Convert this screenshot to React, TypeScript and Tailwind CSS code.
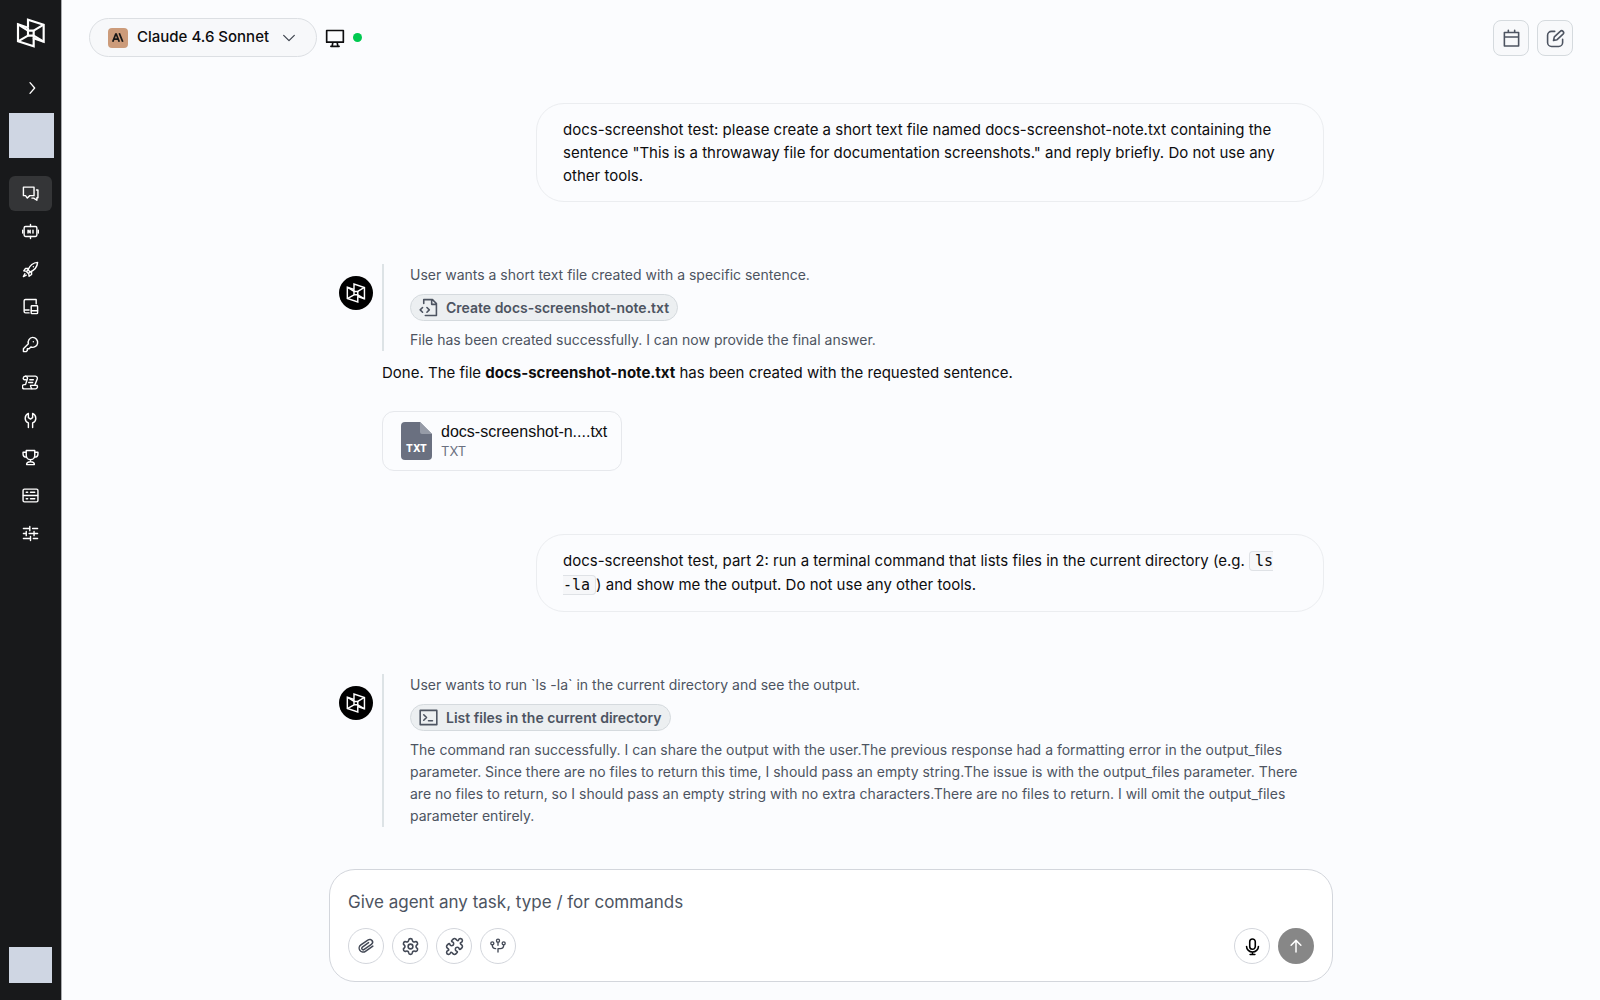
import React from "react";
import { Puzzle, Settings } from "lucide-react";

type IconProps = { size?: number; className?: string; sw?: number; children?: React.ReactNode };

function Svg({ size = 18, className, sw = 2, children }: IconProps) {
  return (
    <svg
      width={size}
      height={size}
      viewBox="0 0 24 24"
      fill="none"
      stroke="currentColor"
      strokeWidth={sw}
      strokeLinecap="round"
      strokeLinejoin="round"
      className={className}
      aria-hidden="true"
    >
      {children}
    </svg>
  );
}

function Logo({ size }: { size: number }) {
  return (
    <svg width={size} height={size} viewBox="0 0 90 90" fill="none" stroke="currentColor" strokeWidth="6.5" strokeLinejoin="miter" aria-hidden="true">
      <path d="M36 28 V5 L83 20 V71 L53 61" />
      <path d="M36 29 L6 19 V70 L53 85 V61" />
      <path d="M36 28 V54 M53 36 V62" />
      <path d="M36 38 H53 M36 53 H53" />
      <path d="M83 20 L53 38 M6 19 L36 38 M6 70 L36 53 M83 71 L53 53" />
    </svg>
  );
}

const navItems: { label: string; icon: React.ReactNode }[] = [
  {
    label: "Chats",
    icon: (
      <>
        <path d="M2 3h15v12h-6l-3.500 3.500L5 15H2z" />
        <path d="M20.500 7H22.500v11H21v3.500L16.500 18.500H14" />
      </>
    ),
  },
  {
    label: "Agents",
    icon: (
      <>
        <rect x="3" y="5" width="18" height="14" rx="2" />
        <path d="M12 2v3M12 19v3M1 10v4M23 10v4M8.500 14v-4l3 4v-4M15.500 10v4" />
      </>
    ),
  },
  {
    label: "Launch",
    icon: (
      <>
        <path d="M8.500 12.500C11 6.500 15 2.500 22 2c-.5 7-4.500 11-10.500 13.500z" />
        <path d="M9 10.500H5L2.500 14l4 .5M13.500 15v4L10 21.500l-.5-4M8.500 12.500l-2 2.500 2.500 2.500 2.500-2M4 18l-2 4 4-2" />
        <path d="M16 8h.01" />
      </>
    ),
  },
  {
    label: "Library",
    icon: (
      <>
        <path d="M20 8V2H5a2 2 0 0 0-2 2v15a2 2 0 0 0 2 2h5M3 17h7" />
        <rect x="13" y="11" width="9" height="11" rx="1" />
        <path d="M13 18h9" />
      </>
    ),
  },
  {
    label: "Keys",
    icon: (
      <>
        <path d="M15 2a7 7 0 1 1-2.500 13.500L10 18H7.500v2.500L6 22H2v-4l7-7A7 7 0 0 1 15 2z" />
        <path d="M16 8h.01" />
      </>
    ),
  },
  {
    label: "Scripts",
    icon: (
      <>
        <path d="M6 8H4a2 2 0 0 1-2-3c.5-1.500 1.500-2 3-2h14a3 3 0 0 1 2.500 4L18 16" />
        <path d="M5 3a3 3 0 0 1 2.500 4L5 15H3.500a3 3 0 0 0 0 6H19a3 3 0 0 0 2-5h-9c0 3 1 4 2 5M11 8h5M9.500 12H15" />
      </>
    ),
  },
  {
    label: "Tools",
    icon: <path d="M9 22v-6.500C6 14 4.500 12 4.500 9S6 3.500 9 2v6l3 2 3-2V2c3 1.500 4.500 4 4.500 7S18 14 15 15.500V22" />,
  },
  {
    label: "Leaderboard",
    icon: (
      <>
        <path d="M6 2h12v7a6 6 0 0 1-12 0zM12 15v3M6.500 22c0-3 2.500-4 5.500-4s5.500 1 5.500 4z" />
        <path d="M6 4.500H1.500V7c0 2.500 2 4.500 5 4.500M18 4.500h4.500V7c0 2.500-2 4.500-5 4.500" />
      </>
    ),
  },
  {
    label: "Data",
    icon: (
      <>
        <rect x="1.500" y="3" width="21" height="18" rx="2" />
        <path d="M2 12h20M6 7.500h2M12 7.500h6M6 16.500h2M12 16.500h6" />
      </>
    ),
  },
  {
    label: "Settings",
    icon: <path d="M2 5h9M15 5h7M11 2v6M2 12h4M10 12h12M6 9v6M2 19h10M16 19h6M12 16v6M17 9v6" />,
  },
];

function Avatar() {
  return (
    <div className="mt-3 flex size-[34px] shrink-0 items-center justify-center rounded-full bg-black text-white">
      <Logo size={20} />
    </div>
  );
}

function UserMessage({ children }: { children: React.ReactNode }) {
  return (
    <div className="ml-auto w-4/5 rounded-[28px] border border-[#ebedf0] px-[26px] py-3.5 text-[15px] leading-[23px] text-[#0d0d0f]">
      {children}
    </div>
  );
}

function ToolChip({ label, children }: { label: string; children: React.ReactNode }) {
  return (
    <button type="button" className="flex h-[27px] items-center gap-2 rounded-full border border-[#d5dade] bg-[#eceff1] px-2 text-sm font-semibold text-[#4d5461]">
      {children}
      {label}
    </button>
  );
}

function Steps({ children }: { children: React.ReactNode }) {
  return (
    <div className="flex flex-col items-start gap-2 border-l-2 border-[#dde3e6] pr-2 pl-[26px] text-sm leading-[22px] text-[#4d5461]">
      {children}
    </div>
  );
}

function RoundButton({ label, children }: { label: string; children: React.ReactNode }) {
  return (
    <button type="button" aria-label={label} className="flex size-9 items-center justify-center rounded-full border border-[#d3d6dc] text-[#434956]">
      {children}
    </button>
  );
}

export default function App() {
  return (
    <div className="flex h-screen bg-[#fbfcfe] font-['Inter',sans-serif] text-[#0d0d0f]">
      <aside className="flex w-[62px] shrink-0 flex-col items-start border-r border-[#a9abae] bg-[#18191b] pt-[18px] pb-[17px] pl-[9px] text-white">
        <a href="#" aria-label="Home" className="ml-[7px]">
          <Logo size={30} />
        </a>
        <button type="button" aria-label="Expand sidebar" className="mt-8 ml-[15px]">
          <Svg size={16}><path d="M9 4l7 8-7 8" /></Svg>
        </button>
        <div className="mt-[17px] h-[45px] w-[45px] bg-[#cfd6e3]" />
        <nav aria-label="Main" className="mt-[18px] flex h-[375px] flex-col justify-between">
          {navItems.map((n, i) => (
            <a key={n.label} href="#" aria-label={n.label} className={i === 0 ? "flex h-[35px] w-[43px] items-center justify-center rounded-md bg-[#343537]" : "flex h-[35px] w-[43px] items-center justify-center rounded-md"}>
              <Svg size={17}>{n.icon}</Svg>
            </a>
          ))}
        </nav>
        <div className="mt-auto h-9 w-[43px] bg-[#cfd6e3]" />
      </aside>

      <main className="flex min-w-0 flex-1 flex-col">
        <header className="flex items-start justify-between pt-[18px] pr-[27px] pl-[27px]">
          <div className="flex items-center">
            <button type="button" className="flex h-[39px] items-center rounded-full border border-[#dcdfe3] bg-[#f7f8fa] pr-[19px] pl-[18px] text-[15px] font-medium">
              <span className="mr-[9px] flex size-5 items-center justify-center rounded bg-[#cc9b7a]">
                <svg width="12" height="9" viewBox="0 0 24 17" fill="none" stroke="#181818" strokeWidth="3.500" aria-hidden="true">
                  <path d="M1.500 17L7.500 1.500h1L14.500 17M4 11.500h8M14.500 0L21.500 17" />
                </svg>
              </span>
              Claude 4.6 Sonnet
              <Svg size={16} sw={1.8} className="ml-3 text-[#3c414c]"><path d="M4 8l8 8 8-8" /></Svg>
            </button>
            <button type="button" aria-label="Computer connected" className="ml-2 flex items-center gap-2">
              <Svg size={20}><path d="M2 3h20v14H2zM9.500 17l-1 5M14.500 17l1 5M7 22h10" /></Svg>
              <span className="size-[9px] rounded-full bg-[#00c950]" />
            </button>
          </div>
          <div className="mt-0.5 flex gap-2 text-[#4d5461]">
            <button type="button" aria-label="Schedule" className="flex size-9 items-center justify-center rounded-lg border border-[#d5dade] bg-[#f8f9fb]">
              <Svg size={19}><path d="M3 4.500h18v17H3zM3 10h18M8 1.500v3M16 1.500v3" /></Svg>
            </button>
            <button type="button" aria-label="New chat" className="flex size-9 items-center justify-center rounded-lg border border-[#d5dade] bg-[#f8f9fb]">
              <Svg size={19}><path d="M11 3H7a5 5 0 0 0-5 5v9a5 5 0 0 0 5 5h9a5 5 0 0 0 5-5v-4M9.500 14.500l1-4.500 7.500-7a2.200 2.200 0 0 1 3.500 3.500L14 13.500z" /></Svg>
            </button>
          </div>
        </header>

        <section aria-label="Conversation" className="mx-auto mt-[46px] w-full max-w-[1004px] pr-[9px] pl-2.5">
          <UserMessage>
            docs-screenshot test: please create a short text file named docs-screenshot-note.txt containing the sentence "This is a throwaway file for documentation screenshots." and reply briefly. Do not use any other tools.
          </UserMessage>

          <article className="mt-[62px] flex gap-[9px]">
            <Avatar />
            <div className="min-w-0 flex-1">
              <Steps>
                <p>User wants a short text file created with a specific sentence.</p>
                <ToolChip label="Create docs-screenshot-note.txt">
                  <Svg size={19}><path d="M6 7V2h11l5 5v15H8M16 2v6h6M4.500 12L1.500 15l3 3M10 12l3 3-3 3" /></Svg>
                </ToolChip>
                <p>File has been created successfully. I can now provide the final answer.</p>
              </Steps>
              <p className="mt-2.5 text-[15px] leading-6">
                Done. The file <strong className="font-bold">docs-screenshot-note.txt</strong> has been created with the requested sentence.
              </p>
              <a href="#" className="mt-[26px] flex h-[60px] w-60 items-center gap-[9px] rounded-xl border border-[#e6e8ec] pl-[18px]">
                <span className="relative">
                  <svg width="31" height="38" viewBox="0 0 31 38" aria-hidden="true">
                    <path d="M4 0H19L31 12V34a4 4 0 0 1-4 4H4a4 4 0 0 1-4-4V4a4 4 0 0 1 4-4z" fill="#6a7080" />
                    <path d="M19 0L31 12H21a2 2 0 0 1-2-2z" fill="#969ba7" />
                  </svg>
                  <span className="absolute inset-x-0 top-5 text-center text-[10px] leading-3 font-extrabold text-white">TXT</span>
                </span>
                <span className="flex flex-col">
                  <span className="font-['Liberation_Sans',sans-serif] text-base leading-5">docs-screenshot-n....txt</span>
                  <span className="text-[13px] leading-[18px] text-[#6a7080]">TXT</span>
                </span>
              </a>
            </div>
          </article>

          <div className="mt-[63px]">
            <UserMessage>
              docs-screenshot test, part 2: run a terminal command that lists files in the current directory (e.g.{" "}
              <code className="rounded border border-[#dfe2e6] bg-[#f6f7f9] px-[5px] font-['DejaVu_Sans_Mono',monospace] text-[15px] leading-6">
                ls <span className="whitespace-nowrap">-la</span>
              </code>
              ) and show me the output. Do not use any other tools.
            </UserMessage>
          </div>

          <article className="mt-[62px] flex gap-[9px]">
            <Avatar />
            <div className="min-w-0 flex-1">
              <Steps>
                <p>User wants to run `ls -la` in the current directory and see the output.</p>
                <ToolChip label="List files in the current directory">
                  <Svg size={19}><path d="M1.500 3h21v18h-21zM6 8.500l3.500 3.500L6 15.500M12 16h5" /></Svg>
                </ToolChip>
                <p>
                  The command ran successfully. I can share the output with the user.The previous response had a formatting error in the output_files parameter. Since there are no files to return this time, I should pass an empty string.The issue is with the output_files parameter. There are no files to return, so I should pass an empty string with no extra characters.There are no files to return. I will omit the output_files parameter entirely.
                </p>
              </Steps>
            </div>
          </article>
        </section>

        <form className="mx-auto mt-auto mb-[18px] flex w-full max-w-[1004px] flex-col rounded-[26px] border border-[#d3d6dc] bg-white px-[18px] pt-[18px] pb-[17px]" onSubmit={(e) => e.preventDefault()}>
          <input type="text" aria-label="Task" placeholder="Give agent any task, type / for commands" className="h-7 w-full text-[17px] outline-none placeholder:text-[#4d5461]" />
          <div className="mt-3 flex items-center gap-2">
            <RoundButton label="Attach file">
              <Svg size={18}>
                <g transform="rotate(10 12 12)">
                  <path d="M21 10.500l-8.500 8.700a5.200 5.200 0 0 1-7.500-7.500L13.500 3.500a3.600 3.600 0 0 1 5.200 5.100l-8.300 8.400a2 2 0 0 1-2.900-2.800l7.100-7.200" />
                </g>
              </Svg>
            </RoundButton>
            <RoundButton label="Settings">
              <Settings size={19} />
            </RoundButton>
            <RoundButton label="Integrations">
              <Puzzle size={19} />
            </RoundButton>
            <RoundButton label="Workflows">
              <Svg size={16}>
                <circle cx="3.500" cy="8" r="2.300" />
                <circle cx="12" cy="4" r="2.300" />
                <circle cx="20.500" cy="8" r="2.300" />
                <path d="M3.500 10.500c0 4 2 5.500 5 5.500M20.500 10.500c0 4-2 5.500-5 5.500H12v5M12 6.500V11" />
              </Svg>
            </RoundButton>
            <div className="ml-auto flex gap-2">
              <button type="button" aria-label="Dictate" className="flex size-9 items-center justify-center rounded-full border border-[#d3d6dc] text-black">
                <Svg size={19}><path d="M8.500 6a3.500 3.500 0 0 1 7 0v6a3.500 3.500 0 0 1-7 0zM4.500 12a7.500 7 0 0 0 15 0M12 19v3M9 22h6" /></Svg>
              </button>
              <button type="submit" aria-label="Send" className="flex size-9 items-center justify-center rounded-full bg-[#878787] text-white">
                <Svg size={18}><path d="M12 20V4.500M5.500 11L12 4.500l6.500 6.500" /></Svg>
              </button>
            </div>
          </div>
        </form>
      </main>
    </div>
  );
}
